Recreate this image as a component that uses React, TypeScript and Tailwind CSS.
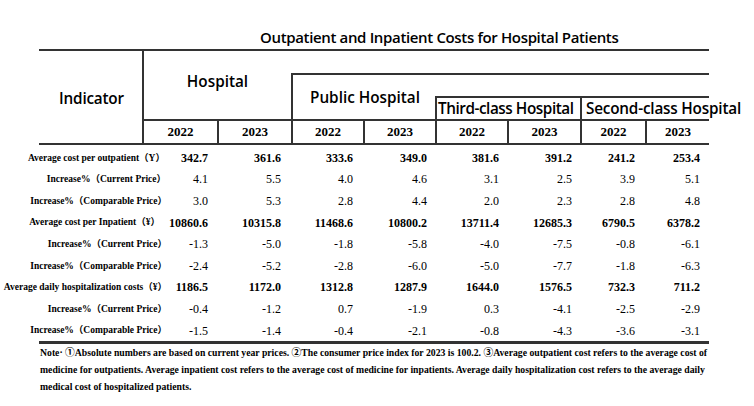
import React from "react";

const serif = "font-['Liberation_Serif','Noto_Sans_CJK_SC',serif]";
const sans = "font-['Open_Sans','Noto_Sans',sans-serif]";

type Row = { label: string; bold: boolean; pr: string; values: string[] };

const rows: Row[] = [
  { label: "Average cost per outpatient（Y）", bold: true, pr: "pr-[2px]", values: ["342.7", "361.6", "333.6", "349.0", "381.6", "391.2", "241.2", "253.4"] },
  { label: "Increase%（Current Price）", bold: false, pr: "pr-[1px]", values: ["4.1", "5.5", "4.0", "4.6", "3.1", "2.5", "3.9", "5.1"] },
  { label: "Increase%（Comparable Price）", bold: false, pr: "pr-0", values: ["3.0", "5.3", "2.8", "4.4", "2.0", "2.3", "2.8", "4.8"] },
  { label: "Average cost per Inpatient（¥）", bold: true, pr: "pr-[7px]", values: ["10860.6", "10315.8", "11468.6", "10800.2", "13711.4", "12685.3", "6790.5", "6378.2"] },
  { label: "Increase%（Current Price）", bold: false, pr: "pr-0", values: ["-1.3", "-5.0", "-1.8", "-5.8", "-4.0", "-7.5", "-0.8", "-6.1"] },
  { label: "Increase%（Comparable Price）", bold: false, pr: "pr-0", values: ["-2.4", "-5.2", "-2.8", "-6.0", "-5.0", "-7.7", "-1.8", "-6.3"] },
  { label: "Average daily hospitalization costs（¥）", bold: true, pr: "pr-0", values: ["1186.5", "1172.0", "1312.8", "1287.9", "1644.0", "1576.5", "732.3", "711.2"] },
  { label: "Increase%（Current Price）", bold: false, pr: "pr-0", values: ["-0.4", "-1.2", "0.7", "-1.9", "0.3", "-4.1", "-2.5", "-2.9"] },
  { label: "Increase%（Comparable Price）", bold: false, pr: "pr-0", values: ["-1.5", "-1.4", "-0.4", "-2.1", "-0.8", "-4.3", "-3.6", "-3.1"] },
];

const colPr = ["pr-[8px]", "pr-[9px]", "pr-[9px]", "pr-[7px]", "pr-[7px]", "pr-[7px]", "pr-[9px]", "pr-[9px]"];

const years = [
  { y: "2022", cls: "" },
  { y: "2023", cls: "border-l-2" },
  { y: "2022", cls: "border-l-2" },
  { y: "2023", cls: "border-l-2" },
  { y: "2022", cls: "border-l-2" },
  { y: "2023", cls: "border-l-2" },
  { y: "2022", cls: "border-l-2" },
  { y: "2023", cls: "border-l-2" },
];

export default function App() {
  return (
    <div className="w-[754px] h-[406px] bg-white text-black overflow-hidden">
      {/* Title */}
      <div className={`h-[49px] pt-[27px] pl-[260px] ${sans} text-[15px] leading-[20px] font-semibold tracking-[-0.35px] whitespace-nowrap`}>
        Outpatient and Inpatient Costs for Hospital Patients
      </div>

      {/* Header grid */}
      <div
        className={`ml-[39px] w-[670px] border-t-2 border-b-2 border-[#333] grid grid-cols-[105px_73px_74px_72px_72px_72px_73px_65px_64px] grid-rows-[22px_23px_25px_22px] ${sans} text-[15.3px] font-semibold`}
      >
        <div className="col-start-1 col-span-1 row-start-1 row-span-4 border-r-2 border-[#333] flex items-center justify-center pl-[2px] pt-[3px] tracking-[-0.2px]">
          Indicator
        </div>
        <div className="col-start-2 col-span-2 row-start-1 row-span-3 border-b-2 border-[#333] flex items-center justify-center pb-[8px]">
          Hospital
        </div>
        <div className="col-start-4 col-span-5 row-start-1" />
        <div className="col-start-4 col-span-2 row-start-2 row-span-2 border-t-2 border-l-2 border-b-2 border-[#333] flex items-center justify-center pl-[2px] whitespace-nowrap">
          Public Hospital
        </div>
        <div className="col-start-6 col-span-4 row-start-2 border-t-2 border-[#333]" />
        <div className="col-start-6 col-span-2 row-start-3 border-t-2 border-l-2 border-b-2 border-[#333] flex items-center pl-[1px] whitespace-nowrap tracking-[-0.45px]">
          Third-class Hospital
        </div>
        <div className="col-start-8 col-span-2 row-start-3 border-t-2 border-l-2 border-b-2 border-[#333] flex items-center pl-[4px] whitespace-nowrap overflow-visible tracking-[-0.2px]">
          Second-class Hospital
        </div>
        {years.map((c, i) => (
          <div
            key={i}
            className={`row-start-4 ${c.cls} border-[#333] flex items-center justify-center ${serif} text-[13px] font-bold`}
          >
            {c.y}
          </div>
        ))}
      </div>

      {/* Data rows */}
      <div className={`pt-[2px] ${serif}`}>
        {rows.map((r, i) => (
          <div key={i} className="grid grid-cols-[167px_49px_74px_72px_72px_72px_73px_65px_65px] h-[21.6px] items-center">
            <div className={`text-right whitespace-nowrap text-[9.5px] font-bold ${r.pr}`}>{r.label}</div>
            {r.values.map((v, j) => (
              <div key={j} className={`text-right text-[12px] ${r.bold ? "font-bold" : "font-normal"} ${colPr[j]}`}>
                {v}
              </div>
            ))}
          </div>
        ))}
      </div>
      <div className="ml-[39px] w-[670px] h-[3px] bg-[#333]" />

      {/* Note */}
      <div className={`pl-[40px] ${serif} text-[9.72px] leading-[17px] font-bold whitespace-nowrap`}>
        <div>Note· ①Absolute numbers are based on current year prices. ②The consumer price index for 2023 is 100.2. ③Average outpatient cost refers to the average cost of</div>
        <div>medicine for outpatients. Average inpatient cost refers to the average cost of medicine for inpatients. Average daily hospitalization cost refers to the average daily</div>
        <div>medical cost of hospitalized patients.</div>
      </div>
    </div>
  );
}
